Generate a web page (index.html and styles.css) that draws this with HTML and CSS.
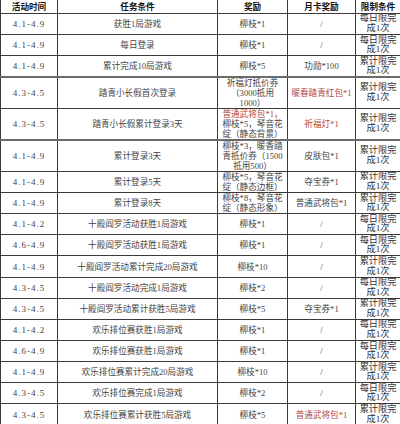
FILE: index.html
```html
<!DOCTYPE html>
<html lang="zh">
<head>
<meta charset="utf-8">
<link rel="stylesheet" href="styles.css">
</head>
<body>
<table class="tbl">
<colgroup>
<col class="c1"><col class="c2"><col class="c3"><col class="c4"><col class="c5">
</colgroup>
<tr class="h"><th>活动时间</th><th>任务条件</th><th>奖励</th><th>月卡奖励</th><th>限制条件</th></tr>
<tr class="r"><td class="d">4.1-4.9</td><td>获胜1局游戏</td><td>柳枝*1</td><td>/</td><td class="lim">每日限完<br>成1次</td></tr>
<tr class="r"><td class="d">4.1-4.9</td><td>每日登录</td><td>柳枝*1</td><td>/</td><td class="lim">每日限完<br>成1次</td></tr>
<tr class="r"><td class="d">4.1-4.9</td><td>累计完成10局游戏</td><td>柳枝*5</td><td>功勋*100</td><td class="lim">累计限完<br>成1次</td></tr>
<tr class="t thick"><td class="d">4.3-4.5</td><td>踏青小长假首次登录</td><td class="ml">祈福灯抵价券<br>（3000抵用<br>1000）</td><td class="red">暖春踏青红包*1</td><td class="lim">累计限完<br>成1次</td></tr>
<tr class="t"><td class="d">4.3-4.5</td><td>踏青小长假累计登录3天</td><td class="ml"><span class="red">普通武将包*1，</span><br>柳枝*5，琴音花<br>绽（静态背景）</td><td class="red">祈福灯*1</td><td class="lim">累计限完<br>成1次</td></tr>
<tr class="t thick"><td class="d">4.1-4.9</td><td>累计登录3天</td><td class="ml">柳枝*3，暖香踏<br>青抵价券（1500<br>抵用500）</td><td>皮肤包*1</td><td class="lim">累计限完<br>成1次</td></tr>
<tr class="r"><td class="d">4.1-4.9</td><td>累计登录5天</td><td class="ml">柳枝*5，琴音花<br>绽（静态边框）</td><td>夺宝券*1</td><td class="lim">累计限完<br>成1次</td></tr>
<tr class="r"><td class="d">4.1-4.9</td><td>累计登录8天</td><td class="ml">柳枝*8，琴音花<br>绽（静态形象）</td><td>普通武将包*1</td><td class="lim">累计限完<br>成1次</td></tr>
<tr class="r"><td class="d">4.1-4.2</td><td>十殿阎罗活动获胜1局游戏</td><td>柳枝*1</td><td>/</td><td class="lim">每日限完<br>成1次</td></tr>
<tr class="r"><td class="d">4.6-4.9</td><td>十殿阎罗活动获胜1局游戏</td><td>柳枝*1</td><td>/</td><td class="lim">每日限完<br>成1次</td></tr>
<tr class="r"><td class="d">4.1-4.9</td><td>十殿阎罗活动累计完成20局游戏</td><td>柳枝*10</td><td>/</td><td class="lim">累计限完<br>成1次</td></tr>
<tr class="r"><td class="d">4.3-4.5</td><td>十殿阎罗活动完成1局游戏</td><td>柳枝*2</td><td>/</td><td class="lim">每日限完<br>成1次</td></tr>
<tr class="r"><td class="d">4.3-4.5</td><td>十殿阎罗活动累计获胜5局游戏</td><td>柳枝*5</td><td>夺宝券*1</td><td class="lim">累计限完<br>成1次</td></tr>
<tr class="r"><td class="d">4.1-4.2</td><td>欢乐排位赛获胜1局游戏</td><td>柳枝*1</td><td>/</td><td class="lim">每日限完<br>成1次</td></tr>
<tr class="r"><td class="d">4.6-4.9</td><td>欢乐排位赛获胜1局游戏</td><td>柳枝*1</td><td>/</td><td class="lim">每日限完<br>成1次</td></tr>
<tr class="r"><td class="d">4.1-4.9</td><td>欢乐排位赛累计完成20局游戏</td><td>柳枝*10</td><td>/</td><td class="lim">累计限完<br>成1次</td></tr>
<tr class="r"><td class="d">4.3-4.5</td><td>欢乐排位赛完成1局游戏</td><td>柳枝*2</td><td>/</td><td class="lim">每日限完<br>成1次</td></tr>
<tr class="r"><td class="d">4.3-4.5</td><td>欢乐排位赛累计获胜5局游戏</td><td>柳枝*5</td><td class="red">普通武将包*1</td><td class="lim">累计限完<br>成1次</td></tr>
</table>
</body>
</html>
```

FILE: styles.css
```css
html, body {
  margin: 0;
  padding: 0;
  background: #ffffff;
  overflow: hidden;
}
body {
  width: 400px;
  height: 424px;
  font-family: "Liberation Serif", "Noto Sans CJK SC", serif;
  color: #444444;
}
.tbl {
  width: 400px;
  table-layout: fixed;
  border-collapse: collapse;
  font-size: 8.6px;
  line-height: 10px;
}
.c1 { width: 57px; }
.c2 { width: 160px; }
.c3 { width: 70px; }
.c4 { width: 68px; }
.c5 { width: 45px; }
.tbl th, .tbl td {
  border: 1px solid #3a3a3a;
  padding: 0;
  text-align: center;
  vertical-align: middle;
  white-space: nowrap;
  overflow: hidden;
}
.tbl th {
  border-top: none;
  overflow: visible;
  font-family: "Noto Sans CJK SC", sans-serif;
  font-weight: bold;
  font-size: 8.6px;
  line-height: 12.5px;
  color: #111111;
}
.h { height: 13.5px; }
.r { height: 21.15px; }
.t { height: 31.3px; }
.thick td { border-top: 2px solid #6a6a6a; }
.d {
  font-family: "Liberation Serif", serif;
  font-size: 9px;
  letter-spacing: 1px;
  color: #444444;
}
.ml { line-height: 10px; }
.lim {
  font-size: 9.2px;
  line-height: 9.6px;
  color: #333333;
}
.red { color: #b5473c; }
```
